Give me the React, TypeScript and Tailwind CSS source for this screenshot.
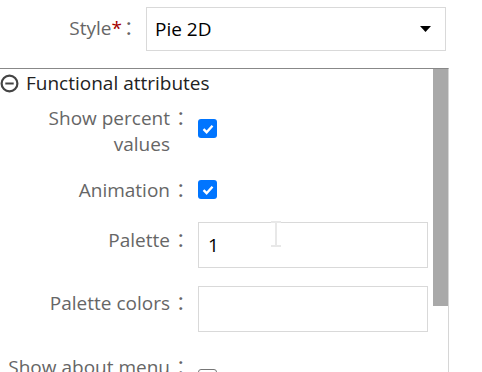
import React from "react";

const Label = ({ children }: { children: React.ReactNode }) => (
  <div className="w-[198px] shrink-0 flex justify-end text-[19px] leading-[26px] text-[#666]">
    <div className="text-right">{children}</div>
    <span className="w-[28px] shrink-0 text-left pl-[6px]">：</span>
  </div>
);

const Check = ({ on }: { on?: boolean }) =>
  on ? (
    <div className="w-[19px] h-[19px] rounded-[3px] bg-[#0075ff] flex items-center justify-center">
      <svg width="12" height="10" viewBox="0 0 12 10">
        <path d="M1.5 5.2 L4.6 8.2 L10.5 1.8" stroke="white" strokeWidth="2.4" fill="none" />
      </svg>
    </div>
  ) : (
    <div className="w-[19px] h-[19px] rounded-[3px] border border-[#767676] bg-white" />
  );

export default function App() {
  return (
    <div className="w-[482px] h-[372px] overflow-hidden bg-white font-['Open_Sans','Noto_Sans_CJK_SC',sans-serif]">
      <div className="flex items-start pt-[7px] h-[68px]">
        <div className="w-[146px] shrink-0 flex justify-end text-[19px] leading-[26px] text-[#666] pt-[8px]">
          <span>
            Style<span className="text-[#a40000]">*</span>
          </span>
          <span className="w-[24px] shrink-0 text-left pl-[2px]">：</span>
        </div>
        <div className="w-[300px] h-[44px] border border-[#d9d9d9] flex items-center justify-between pl-[8px] pr-[14px]">
          <span className="text-[19px] text-black">Pie 2D</span>
          <svg width="11" height="6" viewBox="0 0 11 6">
            <path d="M0 0 H11 L5.5 6 Z" fill="black" />
          </svg>
        </div>
      </div>
      <div className="flex w-[449px] h-[304px] border-t border-t-[#888] border-r border-r-[#d6d6d6]">
        <div className="flex-1 relative">
          <div className="flex items-center h-[28px] pt-[1px]">
            <svg width="19" height="19" viewBox="0 0 19 19">
              <circle cx="9.5" cy="9.5" r="7.9" stroke="#444" strokeWidth="2.2" fill="none" />
              <path d="M5.3 9.5 H13.7" stroke="#444" strokeWidth="2" />
            </svg>
            <span className="ml-[7px] text-[19px] text-[#222]">Functional attributes</span>
          </div>
          <div className="flex items-start mt-[8px]">
            <Label>
              Show percent
              <br />
              values
            </Label>
            <div className="mt-[14px]">
              <Check on />
            </div>
          </div>
          <div className="flex items-start mt-[20px]">
            <Label>Animation</Label>
            <div className="mt-[3px]">
              <Check on />
            </div>
          </div>
          <div className="flex items-start mt-[19px]">
            <div className="pt-[5px]">
              <Label>Palette</Label>
            </div>
            <div className="w-[230px] h-[46px] border border-[#d9d9d9] flex items-center pl-[9px] text-[19px] text-black">
              1
            </div>
          </div>
          <div className="flex items-start mt-[18px]">
            <div className="pt-[4px]">
              <Label>Palette colors</Label>
            </div>
            <div className="w-[230px] h-[46px] border border-[#d9d9d9]" />
          </div>
          <div className="flex items-start mt-[22px]">
            <Label>Show about menu</Label>
            <div className="mt-[15px]">
              <Check />
            </div>
          </div>
          <svg width="12" height="26" viewBox="0 0 12 26" className="absolute left-[270px] top-[152px]">
            <path d="M1 1 H11 M6 1 V25 M1 25 H11" stroke="#e8e8e8" strokeWidth="2" fill="none" />
          </svg>
        </div>
        <div className="w-[15px] shrink-0">
          <div className="h-[237px] bg-[#a9a9a9]" />
        </div>
      </div>
    </div>
  );
}
